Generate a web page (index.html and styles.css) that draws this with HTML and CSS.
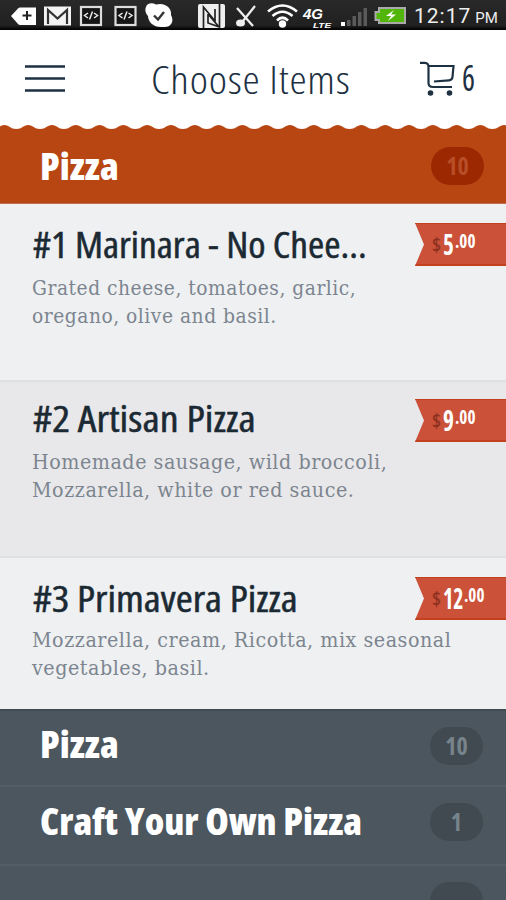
FILE: index.html
```html
<!DOCTYPE html>
<html lang="en">
<head>
<meta charset="utf-8">
<title>Choose Items</title>
<link rel="stylesheet" href="styles.css">
</head>
<body>
<div class="status">
  <svg class="status-icons" width="372" height="30" viewBox="0 0 372 30">
    <path d="M11 16L18 8.500Q19 7.500 20 7.500H36V25H20Q19 25 18 24Z" fill="#fff"/>
    <path d="M27 11v9M22.500 15.500h9" stroke="#222" stroke-width="2"/>
    <rect x="44" y="6.500" width="27" height="19" fill="#f4f4f4"/>
    <path d="M48 24V10L57.500 18.500L67 10V24" fill="none" stroke="#333" stroke-width="2.200"/>
    <g fill="#151515" stroke="#ddd" stroke-width="2.200">
      <rect x="81" y="7" width="20" height="18"/><rect x="115.500" y="7" width="20" height="18"/>
    </g>
    <g fill="none" stroke="#e8e8e8" stroke-width="1.500">
      <path d="M88 13l-3.500 2.500l3.500 2.500M94 13l3.500 2.500l-3.500 2.500M92.500 11.500l-3 8"/>
      <path d="M122.500 13l-3.500 2.500l3.500 2.500M128.500 13l3.500 2.500l-3.500 2.500M127 11.500l-3 8"/>
    </g>
    <path d="M146 7C147 3 152 2.500 156 4.500C165 2 172 8 171 15C175 22 170 28 163 27C154 28 148 22 148 16C145 13 145 9 146 7Z" fill="#fff"/>
    <path d="M154 15.500l4 4l6-7.500" fill="none" stroke="#333" stroke-width="2.400"/>
    <rect x="198" y="4" width="27" height="24" rx="2" fill="#eee"/>
    <path d="M203.500 28V7L215 21V9M208 14V23L219.500 27V4M208 14L219 27" fill="none" stroke="#222" stroke-width="1.700"/>
    <path d="M237 8l16 18M243 21L255 6" stroke="#eee" stroke-width="2.300"/>
    <ellipse cx="240.500" cy="23" rx="4.500" ry="3.500" fill="#eee"/>
    <g fill="none" stroke="#fff" stroke-width="2.600">
      <path d="M268 11.500Q282.500 -.5 297 11.500M272.500 16Q282.500 7.500 292.500 16M277 20.500Q282.500 15 288 20.500"/>
    </g>
    <circle cx="282.500" cy="24" r="3.700" fill="#fff"/>
    <text x="303" y="19" class="net-main" textLength="20" lengthAdjust="spacingAndGlyphs">4G</text>
    <text x="313" y="28" class="net-sub" textLength="18" lengthAdjust="spacingAndGlyphs">LTE</text>
    <path d="M341 22h4v4h-4z" fill="#fff"/>
    <path d="M347 20h3.500v6h-3.500zM352.500 16h3.500v10h-3.500zM358 12h3.500v14h-3.500zM363.500 8h3.500v18h-3.500z" fill="#5a5a5a"/>
  </svg>
  <svg class="battery" width="34" height="30" viewBox="372 0 34 30">
    <path d="M379 8H405V23H379V20H375.500V12H379Z" fill="#52b60a" stroke="#aaa" stroke-width="2"/>
    <path d="M394 10l-8 6h5l-3 5l8-6.500h-5z" fill="#fff"/>
  </svg>
  <div class="clock"><span class="time">12:17</span><span class="pm">PM</span></div>
</div>
<header class="header">
  <svg class="menu" width="40" height="28" viewBox="0 0 40 28"><path d="M0 1.500H40M0 13.500H40M0 25.500H40" stroke="#1d3143" stroke-width="2.600"/></svg>
  <h1 class="title">Choose Items</h1>
  <svg class="cart" width="36" height="36" viewBox="0 0 36 36">
    <path d="M0 1.800H5Q8.500 2 8.500 6V22Q8.500 26 13 26H32M8.500 5H33.500L32.500 16Q32.300 19 29 19.300L14 20.500" fill="none" stroke="#1d3143" stroke-width="2.200"/>
    <circle cx="10.500" cy="32" r="2.800" fill="#1d3143"/><circle cx="29.500" cy="32" r="2.800" fill="#1d3143"/>
  </svg>
  <span class="cart-count">6</span>
</header>
<svg class="scallop" width="506" height="5" viewBox="0 0 506 5">
  <defs><pattern id="wave" x="-7.500" width="23.800" height="5" patternUnits="userSpaceOnUse"><path d="M0 5V4C6 4 7 0 11.900 0S17.800 4 23.800 4V5Z" fill="#b84613"/></pattern></defs>
  <rect width="506" height="5" fill="url(#wave)"/>
</svg>
<section class="category active"><h2 class="cat-name">Pizza</h2><span class="badge">10</span></section>
<main>
  <article class="item first-item">
    <div class="info"><h3 class="name">#1 Marinara - No Chee...</h3><p class="desc">Grated cheese, tomatoes, garlic,<br>oregano, olive and basil.</p></div>
    <div class="ribbon"><span class="currency">$</span><span class="amount">5</span><span class="cents">.00</span></div>
  </article>
  <article class="item alt">
    <div class="info"><h3 class="name">#2 Artisan Pizza</h3><p class="desc">Homemade sausage, wild broccoli,<br>Mozzarella, white or red sauce.</p></div>
    <div class="ribbon"><span class="currency">$</span><span class="amount">9</span><span class="cents">.00</span></div>
  </article>
  <article class="item last">
    <div class="info"><h3 class="name">#3 Primavera Pizza</h3><p class="desc">Mozzarella, cream, Ricotta, mix seasonal<br>vegetables, basil.</p></div>
    <div class="ribbon"><span class="currency">$</span><span class="amount wide">12</span><span class="cents">.00</span></div>
  </article>
</main>
<section class="category first"><h2 class="cat-name">Pizza</h2><span class="badge">10</span></section>
<section class="category"><h2 class="cat-name">Craft Your Own Pizza</h2><span class="badge">1</span></section>
<section class="category"><span class="badge"></span></section>
</body>
</html>
```

FILE: styles.css
```css
* { box-sizing: border-box; }
html, body { height: 900px; overflow: hidden; }
body { margin: 0; background: #fff; font-family: "Open Sans", "Noto Sans", sans-serif; font-stretch: 75%; }
h1, h2, h3, p { margin: 0; }
svg { display: block; flex: none; }

.status { height: 30px; display: flex; background: linear-gradient(#292929, #202020 85%, #000); color: #eee; overflow: hidden; }
.net-main { font: italic 900 14px "Liberation Sans", sans-serif; fill: #fff; }
.net-sub { font: italic bold 8px "Liberation Sans", sans-serif; fill: #fff; }
.clock { display: flex; align-items: baseline; gap: 4px; padding-left: 8px; font-family: Roboto, sans-serif; font-stretch: 100%; line-height: 33px; white-space: nowrap; }
.time { font-size: 21px; letter-spacing: 1px; }
.pm { font-size: 15px; }

.header { height: 95px; display: flex; align-items: flex-start; color: #1d3143; }
.menu { margin: 35px 0 0 25px; }
.title { width: 198px; margin: 23px 0 0 86px; font-size: 39px; font-weight: 300; letter-spacing: .7px; line-height: 52px; white-space: nowrap; transform: scaleX(1.115); transform-origin: 0 0; }
.cart { margin: 31px 0 0 71px; }
.cart-count { margin: 25px 0 0 6px; font-size: 36px; line-height: 46px; transform: scaleX(.85); transform-origin: 0 0; }

.category { height: 79px; display: flex; justify-content: space-between; align-items: flex-start; padding: 9px 23px 0 40px; background: #4b565e; color: #fff; border-top: 2px solid #525e66; }
.category.first { height: 76px; padding-top: 8px; border-top: 2px solid #414c52; }
.category.active { height: 74px; padding: 11px 22px 0 40px; background: #b84613; border: 0; border-bottom: 1px solid #bd6f50; }
.cat-name { font-size: 37px; font-weight: 800; line-height: 50px; white-space: nowrap; transform: scaleX(1.025); transform-origin: 0 0; }
.badge { width: 53px; height: 38px; margin: 7px 0 0 auto; border-radius: 19px; background: #414a50; color: #78848c; display: flex; justify-content: center; align-items: center; font-size: 24px; font-weight: 700; line-height: 36px; }
.active .badge { margin-top: 6px; background: #9b2800; color: #b84e28; }
.first .badge { margin-top: 8px; }

.item { height: 178px; display: flex; justify-content: space-between; background: #eef0f2; border-bottom: 2px solid #dfe0e3; overflow: hidden; }
.alt { height: 176px; background: #e8e8ea; }
.last { height: 151px; border-bottom: 0; }
.info { width: 382px; padding: 15px 0 0 32px; }
.alt .info { padding-top: 11px; }
.last .info { padding-top: 15px; }
.name { margin-left: 1px; color: #1b2933; font-size: 37px; font-weight: 400; -webkit-text-stroke: .5px #1b2933; line-height: 50px; height: 55px; white-space: nowrap; transform: scaleX(1.063); transform-origin: 0 0; }
.alt .name { transform: scaleX(1.135); }
.last .name { height: 53px; transform: scaleX(1.115); }
.desc { color: #7c858f; font: 20px/28px "DejaVu Serif Condensed", "DejaVu Serif", serif; letter-spacing: .5px; white-space: nowrap; transform: scaleX(1.063); transform-origin: 0 0; }
.first-item .desc { transform: scaleX(1.038); }
.ribbon { width: 91px; height: 43px; margin-top: 19px; padding: 0 0 0 17px; display: flex; align-items: flex-start; background: #cb5138; border-top: 1px solid #c44120; border-bottom: 2px solid #c44120; clip-path: polygon(0 0, 100% 0, 100% 100%, 0 100%, 9px 50%); color: #fff; font-weight: 700; }
.alt .ribbon { margin-top: 17px; }
.currency { width: 11px; color: #8b3020; font-size: 20px; font-weight: 600; line-height: 42px; }
.amount { width: 12px; font-size: 29px; line-height: 40px; transform: scaleX(.8); transform-origin: 0 0; }
.amount.wide { width: 21px; transform: scaleX(.75); }
.cents { font-size: 19px; line-height: 34px; transform: scaleX(.9); transform-origin: 0 0; }
```
